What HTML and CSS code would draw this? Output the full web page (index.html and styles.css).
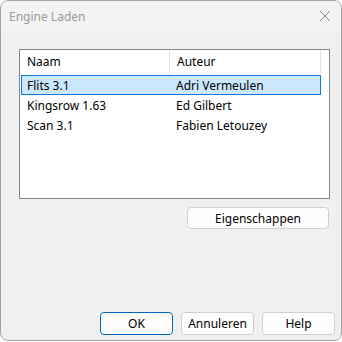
FILE: index.html
```html
<!DOCTYPE html>
<html lang="nl">
<head>
<meta charset="utf-8">
<title>Engine Laden</title>
<link rel="stylesheet" href="styles.css">
</head>
<body>
<div class="window">
  <div class="titlebar">
    <span class="title">Engine Laden</span>
    <svg class="close" width="12" height="12" viewBox="0 0 12 12"><path d="M1 1 L11 11 M11 1 L1 11" stroke="#8a8a8a" stroke-width="1" fill="none"/></svg>
  </div>
  <div class="content">
    <div class="listbox">
      <div class="header">
        <div class="hcell col1">Naam</div>
        <div class="hcell col2">Auteur</div>
      </div>
      <div class="row selected"><div class="cell col1">Flits 3.1</div><div class="cell col2">Adri Vermeulen</div></div>
      <div class="row"><div class="cell col1">Kingsrow 1.63</div><div class="cell col2">Ed Gilbert</div></div>
      <div class="row"><div class="cell col1">Scan 3.1</div><div class="cell col2">Fabien Letouzey</div></div>
    </div>
    <div class="props-row">
      <button class="btn props">Eigenschappen</button>
    </div>
    <div class="spacer"></div>
    <div class="actions">
      <button class="btn default">OK</button>
      <button class="btn">Annuleren</button>
      <button class="btn">Help</button>
    </div>
  </div>
</div>
</body>
</html>
```
FILE: styles.css
```css
html, body {
  margin: 0;
  padding: 0;
  background: #ffffff;
}
body {
  font-family: "Noto Sans", "Segoe UI", sans-serif;
  font-size: 12px;
  color: #000;
}
.window {
  width: 342px;
  height: 341px;
  box-sizing: border-box;
  border: 1px solid #a3a3a3;
  border-radius: 8px;
  background: #f0f0f0;
  display: flex;
  flex-direction: column;
  overflow: hidden;
}
.titlebar {
  height: 30px;
  flex: none;
  background: #f3f3f3;
  display: flex;
  align-items: center;
  justify-content: space-between;
  padding: 0 10px 0 8px;
}
.title {
  color: #999999;
  font-size: 12px;
}
.close {
  display: block;
}
.content {
  flex: 1;
  display: flex;
  flex-direction: column;
  padding: 18px 6px 5px 18px;
}
.listbox {
  width: 311px;
  height: 150px;
  box-sizing: border-box;
  border: 1px solid #828790;
  background: #fff;
  padding: 0 0 0 1px;
}
.header {
  display: flex;
  height: 25px;
  width: 301px;
  margin-left: -1px;
}
.hcell {
  box-sizing: border-box;
  height: 24px;
  line-height: 24px;
  padding-left: 7px;
  border-right: 1px solid #e5e5e5;
}
.header .col1 { width: 150px; }
.header .col2 { width: 151px; }
.row {
  display: flex;
  height: 20px;
  width: 300px;
  box-sizing: border-box;
  border: 1px solid transparent;
  align-items: center;
}
.row.selected {
  background: #cce8ff;
  border-color: #0f7ad6;
}
.cell {
  box-sizing: border-box;
  padding-left: 5px;
  white-space: nowrap;
}
.row .col1 { width: 149px; }
.row .col2 { width: 149px; }
.props-row {
  display: flex;
  justify-content: flex-end;
  width: 310px;
  margin-top: 8px;
}
.btn {
  font-family: inherit;
  font-size: 12px;
  color: #000;
  background: #fdfdfd;
  border: 1px solid #d0d0d0;
  border-radius: 4px;
  padding: 0;
  box-sizing: border-box;
}
.props {
  width: 142px;
  height: 22px;
}
.spacer {
  flex: 1;
}
.actions {
  display: flex;
  justify-content: flex-end;
  gap: 8px;
}
.actions .btn {
  width: 73px;
  height: 23px;
}
.actions .btn + .btn {
  margin-left: 0;
}
.btn.default {
  border-color: #0067c0;
}
```
